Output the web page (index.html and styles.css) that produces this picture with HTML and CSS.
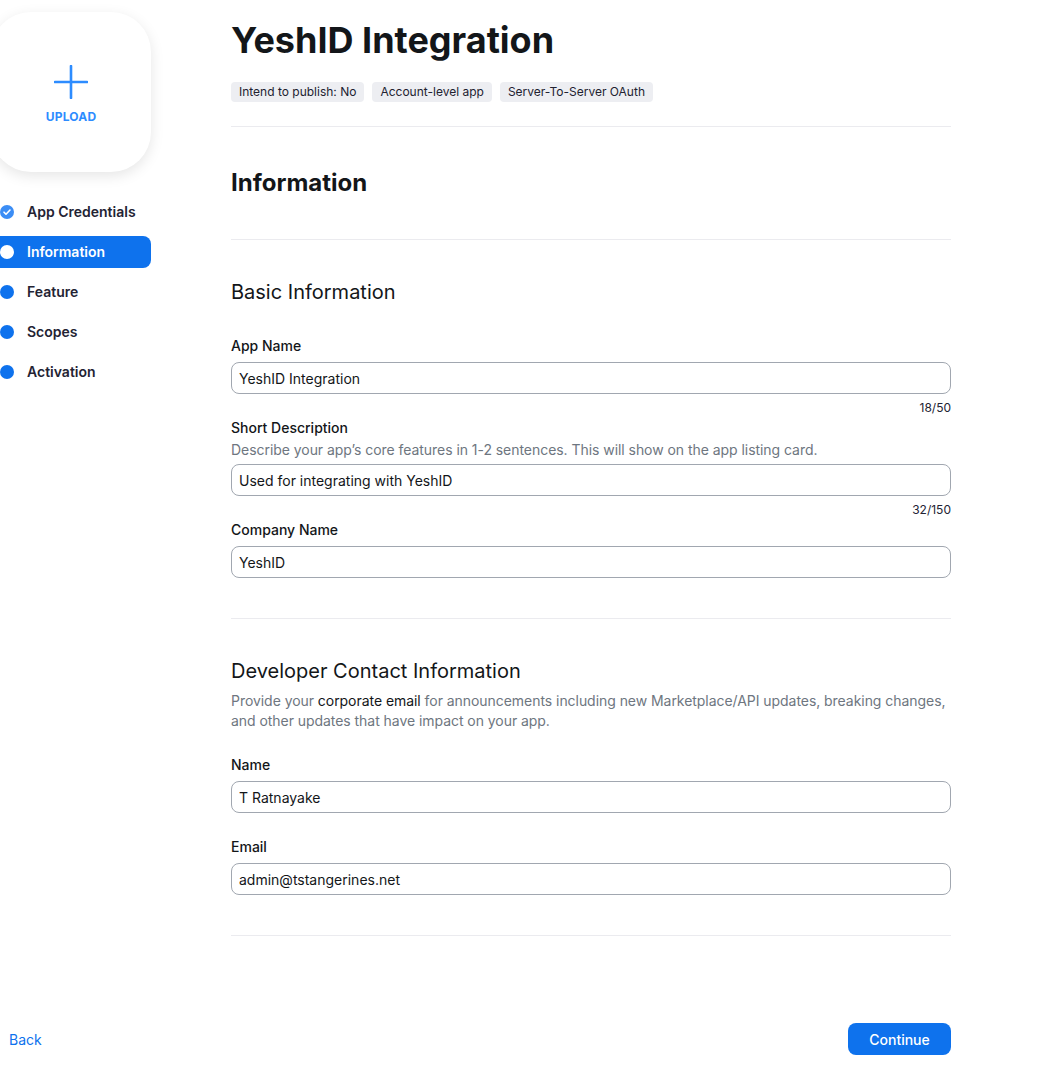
FILE: index.html
```html
<!DOCTYPE html>
<html lang="en">
<head>
<meta charset="utf-8">
<title>YeshID Integration</title>
<link rel="stylesheet" href="styles.css">
</head>
<body>
<div class="page">
  <aside class="sidebar">
    <div class="upload-card">
      <svg class="plus" width="34" height="34" viewBox="0 0 34 34"><path d="M17 1v32M1 17h32" stroke="#2D8CFF" stroke-width="2.6" stroke-linecap="round" fill="none"/></svg>
      <span class="upload-label">UPLOAD</span>
    </div>
    <nav class="steps">
      <div class="step done">
        <svg class="dot-svg" width="14" height="14" viewBox="0 0 14 14"><circle cx="7" cy="7" r="7" fill="#3B8DF5"/><path d="M4 7.2l2 2 4-4.2" stroke="#fff" stroke-width="1.6" fill="none" stroke-linecap="round" stroke-linejoin="round"/></svg>
        <span>App Credentials</span>
      </div>
      <div class="step active"><span class="dot"></span><span>Information</span></div>
      <div class="step"><span class="dot"></span><span>Feature</span></div>
      <div class="step"><span class="dot"></span><span>Scopes</span></div>
      <div class="step"><span class="dot"></span><span>Activation</span></div>
    </nav>
  </aside>
  <main class="main">
    <h1 class="title">YeshID Integration</h1>
    <div class="tags">
      <span class="tag">Intend to publish: No</span>
      <span class="tag">Account-level app</span>
      <span class="tag">Server-To-Server OAuth</span>
    </div>
    <hr class="rule">
    <h2 class="section-title">Information</h2>
    <hr class="rule">
    <section class="group">
      <h3 class="group-title">Basic Information</h3>
      <div class="field">
        <label class="label">App Name</label>
        <div class="input">YeshID Integration</div>
        <div class="counter">18/50</div>
      </div>
      <div class="field">
        <label class="label">Short Description</label>
        <p class="hint">Describe your app’s core features in 1-2 sentences. This will show on the app listing card.</p>
        <div class="input">Used for integrating with YeshID</div>
        <div class="counter">32/150</div>
      </div>
      <div class="field">
        <label class="label">Company Name</label>
        <div class="input">YeshID</div>
      </div>
    </section>
    <hr class="rule">
    <section class="group">
      <h3 class="group-title">Developer Contact Information</h3>
      <p class="hint intro">Provide your <span class="strong">corporate email</span> for announcements including new Marketplace/API updates, breaking changes, and other updates that have impact on your app.</p>
      <div class="field spaced">
        <label class="label">Name</label>
        <div class="input">T Ratnayake</div>
      </div>
      <div class="field spaced">
        <label class="label">Email</label>
        <div class="input">admin@tstangerines.net</div>
      </div>
    </section>
    <hr class="rule">
  </main>
</div>
<footer class="footer">
  <div class="footer-left"><a class="back" href="#">Back</a></div>
  <div class="footer-right"><button class="continue">Continue</button></div>
</footer>
</body>
</html>
```

FILE: styles.css
```css
* { box-sizing: border-box; }
html, body { margin: 0; padding: 0; background: #fff; }
body {
  font-family: Inter, "Noto Sans", "Liberation Sans", sans-serif;
  color: #232333;
  font-size: 14px;
  overflow: hidden;
}
.page {
  display: flex;
  align-items: flex-start;
}
.sidebar {
  width: 160px;
  margin-left: -9px;
  flex-shrink: 0;
}
.upload-card {
  width: 160px;
  height: 160px;
  margin-top: 12px;
  border-radius: 40px;
  background: #fff;
  box-shadow: 0 4px 14px rgba(0,0,0,0.10);
  display: flex;
  flex-direction: column;
  align-items: center;
  justify-content: center;
  gap: 10px;
  padding-top: 4px;
}
.upload-label {
  color: #2D8CFF;
  font-weight: 700;
  font-size: 12px;
  letter-spacing: 0.2px;
}
.steps {
  margin-top: 24px;
  display: flex;
  flex-direction: column;
  gap: 8px;
}
.step {
  height: 32px;
  display: flex;
  align-items: center;
  padding-left: 9px;
  padding-bottom: 1px;
  gap: 13px;
  font-size: 14px;
  font-weight: 600;
  color: #232333;
  border-radius: 8px;
}
.dot {
  width: 14px;
  height: 14px;
  border-radius: 50%;
  background: #0E72ED;
  flex-shrink: 0;
}
.dot-svg { flex-shrink: 0; }
.step.active {
  background: #0E72ED;
  color: #fff;
}
.step.active .dot { background: #fff; }

.main {
  width: 720px;
  margin-left: 80px;
  padding-top: 16px;
}
.title {
  margin: 0;
  font-size: 36px;
  line-height: 48px;
  font-weight: 700;
  color: #131619;
}
.tags {
  margin-top: 18px;
  display: flex;
  gap: 8px;
}
.tag {
  height: 20px;
  line-height: 20px;
  padding: 0 8px;
  font-size: 12px;
  color: #222230;
  background: #edeef2;
  border-radius: 4px;
}
.rule {
  margin: 0;
  border: 0;
  border-top: 1px solid #ebebef;
}
.tags + .rule { margin-top: 24px; }
.section-title {
  margin: 40px 0;
  font-size: 24px;
  line-height: 32px;
  font-weight: 700;
  color: #131619;
}
.group {
  padding: 40px 0;
}
.group-title {
  margin: 0;
  font-size: 20px;
  line-height: 24px;
  font-weight: 400;
  color: #131619;
}
.field { display: flex; flex-direction: column; }
.group-title + .field { margin-top: 32px; }
.field.spaced { margin-top: 24px; }
.label {
  font-size: 14px;
  line-height: 20px;
  font-weight: 500;
  color: #131619;
  margin-bottom: 6px;
}
.hint {
  margin: -4px 0 4px;
  font-size: 14px;
  line-height: 20px;
  color: #6e7680;
  letter-spacing: -0.05px;
}
.hint.intro {
  margin: 8px 0 0;
  line-height: 20px;
}
.strong { color: #131619; }
.input {
  height: 32px;
  border: 1px solid #a1a7b0;
  border-radius: 8px;
  padding: 0 7px;
  display: flex;
  align-items: center;
  font-size: 14px;
  color: #131619;
}
.counter {
  margin-top: 4px;
  text-align: right;
  font-size: 12px;
  line-height: 20px;
  color: #232333;
}
.footer {
  display: flex;
  align-items: center;
  margin-top: 87px;
}
.footer-left {
  width: 231px;
  padding-left: 9px;
}
.back {
  color: #0E72ED;
  font-size: 14px;
  text-decoration: none;
}
.footer-right {
  width: 720px;
  display: flex;
  justify-content: flex-end;
}
.continue {
  width: 103px;
  height: 32px;
  border: 0;
  border-radius: 8px;
  background: #0E72ED;
  color: #fff;
  font-family: Inter, "Noto Sans", sans-serif;
  font-size: 14px;
  font-weight: 500;
}
```
